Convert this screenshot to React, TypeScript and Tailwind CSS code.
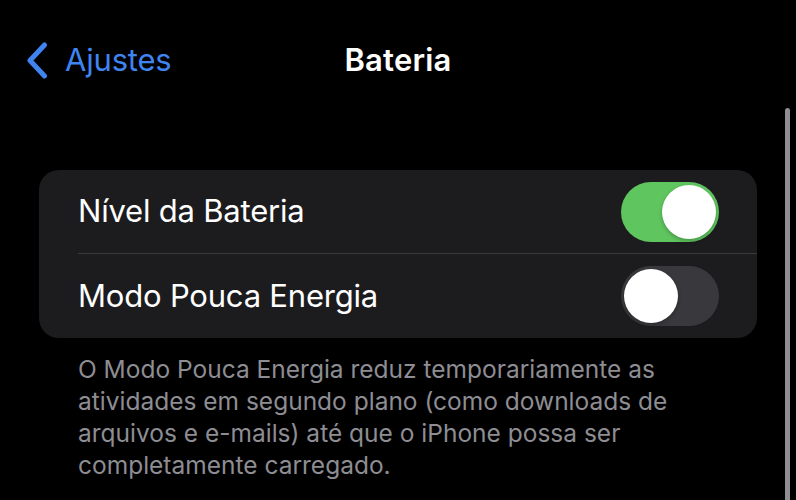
import React from "react";

function Toggle({ on }: { on: boolean }) {
  return (
    <div
      className={`flex h-[60px] w-[98px] items-center rounded-full p-[3px] ${
        on ? "justify-end bg-[#5fc65f]" : "justify-start bg-[#39393d]"
      }`}
    >
      <div className="h-[54px] w-[54px] rounded-full bg-white shadow-[0_2px_4px_rgba(0,0,0,0.25)]" />
    </div>
  );
}

export default function App() {
  return (
    <div
      className="relative h-[500px] w-[796px] overflow-hidden bg-black text-white"
      style={{ fontFamily: "Inter, 'Noto Sans', sans-serif" }}
    >
      {/* Nav bar */}
      <div className="relative flex h-[120px] items-start pt-[41px]">
        <div className="flex items-center pl-[26px] text-[#3f84f0]">
          <svg width="22" height="37" viewBox="0 0 22 37" fill="none">
            <path
              d="M18.5 3 L4 18.5 L18.5 34"
              stroke="#3f84f0"
              strokeWidth="5"
              strokeLinecap="round"
              strokeLinejoin="round"
            />
          </svg>
          <span className="ml-[17px] text-[31px] leading-[38px] tracking-[-0.2px]">Ajustes</span>
        </div>
        <div className="absolute left-0 right-0 top-[41px] text-center text-[31px] font-semibold leading-[38px] tracking-[0.2px]">
          Bateria
        </div>
      </div>

      {/* Settings group */}
      <div className="mx-[39px] mt-[50px] w-[718px] overflow-hidden rounded-[20px] bg-[#1c1c1e]">
        <div className="flex h-[83px] items-center justify-between pl-[39px] pr-[38px]">
          <span className="text-[31px] tracking-[-0.2px]">Nível da Bateria</span>
          <Toggle on />
        </div>
        <div className="ml-[39px] h-px bg-[#3a3a3c]" />
        <div className="flex h-[84px] items-center justify-between pl-[39px] pr-[38px]">
          <span className="text-[31px] tracking-[-0.2px]">Modo Pouca Energia</span>
          <Toggle on={false} />
        </div>
      </div>

      <p className="ml-[78px] mt-[15px] w-[660px] text-[24.5px] leading-[32px] text-[#8d8d93]">
        O Modo Pouca Energia reduz temporariamente as
        <br />
        atividades em segundo plano (como downloads de
        <br />
        arquivos e e-mails) até que o iPhone possa ser
        <br />
        completamente carregado.
      </p>

      {/* Scroll indicator */}
      <div className="absolute right-[6px] top-[108px] h-[400px] w-[5px] rounded-full bg-[#8e8e93]" />
    </div>
  );
}
